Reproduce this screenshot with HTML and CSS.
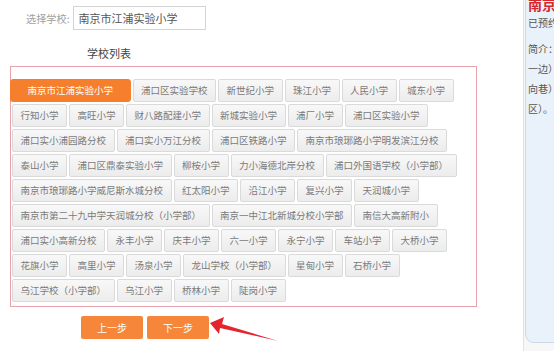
FILE: index.html
```html
<!DOCTYPE html>
<html lang="zh-CN">
<head>
<meta charset="utf-8">
<title>选择学校</title>
<link rel="stylesheet" href="styles.css">
</head>
<body>
<div class="page">
  <div class="main">
    <div class="select-row">
      <span class="select-label">选择学校:</span>
      <div class="select-input">南京市江浦实验小学</div>
    </div>
    <div class="list-title">学校列表</div>
    <div class="school-box">
      <span class="tab active">南京市江浦实验小学</span>
      <span class="tab">浦口区实验学校</span>
      <span class="tab">新世纪小学</span>
      <span class="tab">珠江小学</span>
      <span class="tab">人民小学</span>
      <span class="tab">城东小学</span>
      <span class="tab">行知小学</span>
      <span class="tab">高旺小学</span>
      <span class="tab">财八路配建小学</span>
      <span class="tab">新城实验小学</span>
      <span class="tab">浦厂小学</span>
      <span class="tab">浦口区实验小学</span>
      <span class="tab">浦口实小浦园路分校</span>
      <span class="tab">浦口实小万江分校</span>
      <span class="tab">浦口区铁路小学</span>
      <span class="tab">南京市琅琊路小学明发滨江分校</span>
      <span class="tab">泰山小学</span>
      <span class="tab">浦口区鼎泰实验小学</span>
      <span class="tab">柳桉小学</span>
      <span class="tab">力小海德北岸分校</span>
      <span class="tab">浦口外国语学校（小学部）</span>
      <span class="tab">南京市琅琊路小学威尼斯水城分校</span>
      <span class="tab">红太阳小学</span>
      <span class="tab">沿江小学</span>
      <span class="tab">复兴小学</span>
      <span class="tab">天润城小学</span>
      <span class="tab">南京市第二十九中学天润城分校（小学部）</span>
      <span class="tab">南京一中江北新城分校小学部</span>
      <span class="tab">南信大高新附小</span>
      <span class="tab">浦口实小高新分校</span>
      <span class="tab">永丰小学</span>
      <span class="tab">庆丰小学</span>
      <span class="tab">六一小学</span>
      <span class="tab">永宁小学</span>
      <span class="tab">车站小学</span>
      <span class="tab">大桥小学</span>
      <span class="tab">花旗小学</span>
      <span class="tab">高里小学</span>
      <span class="tab">汤泉小学</span>
      <span class="tab">龙山学校（小学部）</span>
      <span class="tab">星甸小学</span>
      <span class="tab">石桥小学</span>
      <span class="tab">乌江学校（小学部）</span>
      <span class="tab">乌江小学</span>
      <span class="tab">桥林小学</span>
      <span class="tab">陡岗小学</span>
    </div>
    <div class="actions">
      <span class="btn">上一步</span>
      <span class="btn">下一步</span>
    </div>
    <svg class="arrow" width="554" height="351" viewBox="0 0 554 351">
      <polygon points="210,323 224,317 222,324 278,341 220,328 219,334" fill="#e3252d"/>
    </svg>
  </div>
  <div class="side">
    <div class="panel">
      <div class="panel-title">南京市江浦实验小学</div>
      <div class="panel-line">已预约人数：0人</div>
      <div class="panel-line intro">简介：</div>
      <div class="panel-line">一边）江浦街道</div>
      <div class="panel-line">向巷）江浦</div>
      <div class="panel-line">区）。</div>
    </div>
  </div>
</div>
</body>
</html>
```

FILE: styles.css
```css
html, body {
  margin: 0;
  padding: 0;
  overflow: hidden;
  background: #ffffff;
}
body {
  width: 554px;
  height: 351px;
  font-family: "Noto Sans CJK SC", "Noto Sans", sans-serif;
}
.page {
  display: flex;
  width: 554px;
  height: 351px;
  overflow: hidden;
}
.main {
  width: 523px;
  flex: 0 0 523px;
  padding-top: 6px;
  box-sizing: border-box;
}
.select-row {
  display: flex;
  align-items: center;
  margin-left: 26px;
  gap: 3px;
}
.select-label {
  font-size: 10.2px;
  color: #a0a0a0;
}
.select-input {
  width: 133px;
  height: 24px;
  box-sizing: border-box;
  border: 1px solid #d4d4d4;
  padding-left: 5px;
  font-size: 11px;
  line-height: 22px;
  color: #555;
}
.list-title {
  margin: 16px 0 0 87px;
  font-size: 11px;
  line-height: 14px;
  color: #444;
}
.school-box {
  margin: 6px 0 0 10px;
  width: 467px;
  height: 241px;
  box-sizing: border-box;
  border: 1px solid #e7a2aa;
  padding: 12px 6px 3px 1px;
  display: flex;
  flex-wrap: wrap;
  align-content: flex-start;
  gap: 2px 2px;
}
.tab {
  display: block;
  height: 23px;
  box-sizing: border-box;
  padding: 0 7.5px;
  border: 1px solid #dadada;
  border-radius: 2px;
  background: linear-gradient(#f8f8f8, #ececec);
  color: #7a7a7a;
  font-size: 9.5px;
  line-height: 21px;
  white-space: nowrap;
}
.tab.active {
  margin-left: -2px;
  padding: 0 16.5px;
  background: #f57f2c;
  border-color: #f57f2c;
  border-radius: 3px;
  color: #ffffff;
}
.actions {
  display: flex;
  gap: 4px;
  margin: 9px 0 0 81px;
}
.btn {
  display: block;
  width: 62px;
  height: 23px;
  border-radius: 2px;
  background: #f6873a;
  color: #ffffff;
  font-size: 10px;
  line-height: 23px;
  text-align: center;
}
.arrow {
  position: absolute;
  left: 0;
  top: 0;
  pointer-events: none;
}
.side {
  flex: 0 0 200px;
  border-left: 1px solid #e2e2e2;
  background: #f7f7f7;
  height: 351px;
  box-sizing: border-box;
  padding-left: 1px;
}
.panel {
  height: 343px;
  box-sizing: border-box;
  background: #e9f2fa;
  border: 1px solid #c9d9e7;
  border-top: none;
  border-bottom-left-radius: 9px;
  padding-left: 2px;
  white-space: nowrap;
  overflow: hidden;
}
.panel-title {
  margin-top: -5px;
  font-size: 14px;
  line-height: 18px;
  font-weight: bold;
  color: #d8262f;
}
.panel-line {
  font-size: 10px;
  line-height: 20px;
  color: #555;
}
.panel-line.intro {
  margin-top: 6px;
}
```
